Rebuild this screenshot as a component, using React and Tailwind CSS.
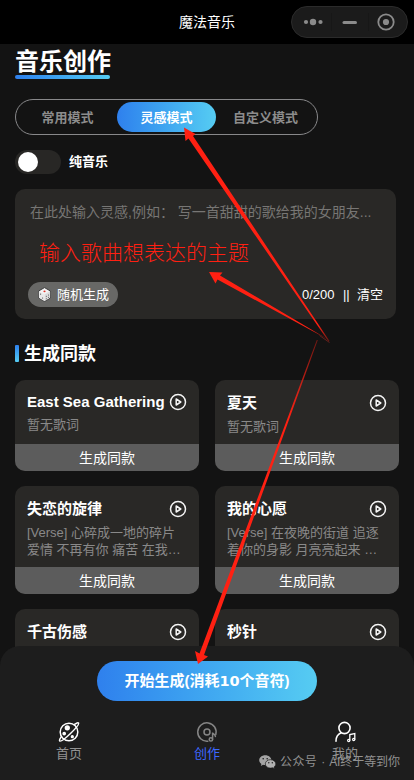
import React from 'react';

const sans = "font-['Liberation_Sans','Noto_Sans_CJK_SC',sans-serif]";

function PlayIcon() {
  return (
    <svg className="h-[18px] w-[18px] shrink-0" viewBox="0 0 18 18" fill="none" stroke="#f4f4f4" strokeWidth="1.5" strokeLinejoin="round">
      <circle cx="9" cy="9" r="7.5" />
      <path d="M7.2 6v6l4.6-3z" />
    </svg>
  );
}

function DiceIcon() {
  return (
    <svg className="h-[15px] w-[15px]" viewBox="0 0 15 15">
      <path d="M7.5.6 13.4 4v7L7.5 14.4 1.6 11V4z" fill="#f2f2f2" stroke="#333" strokeWidth=".9" strokeLinejoin="round" />
      <path d="M7.5 7.4 13.1 4.2v6.6l-5.6 3.3z" fill="#dadada" />
      <path d="M7.5 7.4v6.7L1.9 10.8V4.2z" fill="#e8e8e8" />
      <ellipse cx="7.5" cy="4.3" rx="1.1" ry=".9" fill="#e0362c" />
      <g fill="#444">
        <circle cx="3.6" cy="7.1" r=".6" />
        <circle cx="5.6" cy="11" r=".6" />
        <circle cx="9.3" cy="9.2" r=".5" />
        <circle cx="11.5" cy="7.9" r=".5" />
        <circle cx="9.3" cy="11.7" r=".5" />
        <circle cx="11.5" cy="10.3" r=".5" />
      </g>
    </svg>
  );
}

function PlanetIcon() {
  return (
    <svg className="h-[22px] w-[22px]" viewBox="0 0 22 22" fill="none" stroke="#fff" strokeWidth="1.5" strokeLinecap="round">
      <circle cx="11" cy="11" r="8.8" />
      <path d="M16.6 3.3c2-1.4 3.5-1.8 3.9-1.3.8 1-3 5.7-8 10.5C7.4 17.4 2.7 20.8 1.7 19.9c-.5-.5.1-2 1.5-4" />
      <circle cx="9.3" cy="6.8" r="1.9" fill="#fff" />
      <circle cx="6.2" cy="12.6" r="1.1" fill="#fff" />
      <circle cx="14.3" cy="15.7" r=".9" fill="#fff" />
    </svg>
  );
}

function DiscIcon() {
  return (
    <svg className="h-[22px] w-[22px]" viewBox="0 0 22 22" fill="none" stroke="#858585" strokeWidth="1.5" strokeLinecap="round">
      <path d="M11.8 20.2A9.2 9.2 0 1 1 19.8 13.5" />
      <circle cx="11" cy="11" r="3" />
      <path d="M16.6 18.2v-6.7c.3 1.8 2.6 1.6 2.8 4" />
      <circle cx="14.9" cy="18.4" r="1.7" />
    </svg>
  );
}

function ProfileIcon() {
  return (
    <svg className="h-[22px] w-[22px]" viewBox="0 0 22 22" fill="none" stroke="#fff" strokeWidth="1.6" strokeLinecap="round">
      <circle cx="10.5" cy="7" r="5.6" />
      <path d="M2 20.2c0-4.300 2.200-7.200 5.200-8.400" />
      <path d="M15.8 19.300v-5.700l5-1v5.700" strokeWidth="1.3" />
      <circle cx="14.7" cy="19.500" r="1.1" strokeWidth="1.2" />
      <circle cx="19.7" cy="18.500" r="1.1" strokeWidth="1.2" />
    </svg>
  );
}

function WechatIcon() {
  return (
    <svg className="h-[14px] w-[17px]" viewBox="0 0 17 14">
      <path d="M6.300.3C2.800.3.200 2.500.200 5.200c0 1.500.8 2.900 2.200 3.800l-.6 1.900 2.200-1.100c.7.2 1.500.3 2.300.3 3.400 0 6.100-2.200 6.100-4.900S9.700.3 6.300.3z" fill="#a4a4a4" />
      <path d="M11.500 4.700c3 0 5.300 1.900 5.300 4.200 0 1.300-.7 2.400-1.800 3.200l.5 1.600-1.900-.9c-.6.200-1.300.3-2.100.3-2.900 0-5.200-1.900-5.200-4.200s2.300-4.200 5.200-4.200z" fill="#b0b0b0" stroke="#1b1b1b" strokeWidth=".7" />
      <g fill="#1b1b1b">
        <circle cx="4.200" cy="3.700" r=".8" />
        <circle cx="8.200" cy="3.700" r=".8" />
        <circle cx="9.800" cy="7.700" r=".7" />
        <circle cx="13.300" cy="7.700" r=".7" />
      </g>
    </svg>
  );
}

function SongCard({ title, lyric, height, pad, gap }) {
  return (
    <article className={`flex flex-col overflow-hidden rounded-[10px] bg-[#292826] ${height}`}>
      <div className={`flex flex-1 flex-col px-3 ${pad} ${gap}`}>
        <div className="flex h-[18px] items-center justify-between">
          <h3 className="whitespace-nowrap text-[15px] font-bold leading-[18px] text-white">{title}</h3>
          <PlayIcon />
        </div>
        <div className="whitespace-nowrap text-[13px] leading-[17px] text-[#898989]">
          {lyric.map((line) => <p key={line}>{line}</p>)}
        </div>
      </div>
      <button className="h-[27px] shrink-0 bg-[#5c5c5c] pt-px text-[14px] leading-[26px] text-white">生成同款</button>
    </article>
  );
}

function NavItem({ icon, label, color }) {
  return (
    <div className="flex flex-col items-center gap-[2px]">
      {icon}
      <span className={`text-[13px] leading-[18px] ${color}`}>{label}</span>
    </div>
  );
}

function Arrows() {
  return (
    <svg className="pointer-events-none absolute left-0 top-0 h-[780px] w-[414px]" viewBox="0 0 414 780">
      <defs>
        <linearGradient id="fadeUp" gradientUnits="userSpaceOnUse" x1="300" y1="300" x2="330" y2="342">
          <stop offset="0" stopColor="#ff2012" />
          <stop offset=".6" stopColor="#ff2012" />
          <stop offset="1" stopColor="#ff2012" stopOpacity=".3" />
        </linearGradient>
        <linearGradient id="fadeDown" gradientUnits="userSpaceOnUse" x1="290" y1="420" x2="318" y2="341">
          <stop offset="0" stopColor="#ff2012" />
          <stop offset="1" stopColor="#ff2012" stopOpacity=".4" />
        </linearGradient>
      </defs>
      <path d="M184 127.500 195.500 134 193 136 329.500 341 328.500 341.500 188.500 138.500 185.500 141z" fill="url(#fadeUp)" />
      <path d="M209 272 222.500 272.500 220 275.500 329 340 217.500 279.500 215.500 283.500z" fill="url(#fadeUp)" />
      <path d="M198 664 195 651 199.500 653.500 316.800 340 317.800 340 204 655 208 656.500z" fill="url(#fadeDown)" />
      <path d="M319.500 335.500 329.500 342.500" stroke="#65211c" strokeWidth="1" />
    </svg>
  );
}

export default function App() {
  return (
    <div className={`relative flex h-[780px] w-[414px] flex-col overflow-hidden bg-[#131313] text-white ${sans}`}>
      <header className="grid h-11 shrink-0 grid-cols-[1fr_auto_1fr] items-center bg-black">
        <span />
        <h1 className="text-[14px] leading-[20px]">魔法音乐</h1>
        <div className="mr-[6px] flex h-8 w-[117px] items-center justify-self-end rounded-full border border-[#2b2b2b] bg-[#1b1b1b]">
          <svg className="h-[30px] w-[115px]" viewBox="0 0 115 30" fill="#8b8b8b">
            <circle cx="14" cy="15" r="2.1" />
            <circle cx="21" cy="15" r="3.2" />
            <circle cx="28.5" cy="15" r="2.1" />
            <rect x="39" y="6" width="1" height="18" fill="#171717" />
            <rect x="50.5" y="14" width="14.5" height="3" rx="1.5" />
            <rect x="76" y="6" width="1" height="18" fill="#171717" />
            <circle cx="94" cy="15" r="7.7" fill="none" stroke="#8b8b8b" strokeWidth="1.8" />
            <circle cx="94" cy="15" r="3.1" />
          </svg>
        </div>
      </header>

      <main className="flex min-h-0 flex-1 flex-col items-start overflow-hidden pl-[15px]">
        <h2 className="h-[31px] text-[24px] font-bold leading-[35px]">音乐创作</h2>
        <div className="h-1 w-[95px] shrink-0 rounded-full bg-linear-to-r from-[#2f80ed] to-[#56ccf2]" />

        <div className="mt-5 grid h-9 w-[303px] shrink-0 grid-cols-[99px_99px_99px] items-center rounded-full border border-[#88888a] px-[2px] text-center text-[13px] font-bold leading-[31px] text-[#8c8c8c]">
          <span>常用模式</span>
          <span className="h-[30px] rounded-full bg-linear-to-r from-[#2f80ed] to-[#56ccf2] text-white">灵感模式</span>
          <span>自定义模式</span>
        </div>

        <div className="mt-[15px] flex h-6 shrink-0 items-center gap-2">
          <div className="flex h-6 w-[46px] items-center rounded-full bg-[#282725] pl-[3px]">
            <span className="h-5 w-5 rounded-full bg-white" />
          </div>
          <span className="text-[13px] font-bold leading-5">纯音乐</span>
        </div>

        <section className="mt-[15px] flex h-[130px] w-[381px] shrink-0 flex-col rounded-[10px] bg-[#292826] pl-[13px] pr-[13px] pt-[13px]">
          <p className="whitespace-pre pl-[2px] text-[14px] leading-5 text-[#777674]">在此处输入灵感,例如： 写一首甜甜的歌给我的女朋友...</p>
          <p className="ml-[11px] mt-[16px] h-[30px] whitespace-nowrap text-[21px] font-light leading-[30px] text-[#ff2012]">输入歌曲想表达的主题</p>
          <div className="mt-[14px] flex h-[25px] items-center justify-between">
            <button className="flex h-[25px] w-[90px] items-center gap-[5px] rounded-full bg-[#686866] pl-[9px] text-[13px]">
              <DiceIcon />
              随机生成
            </button>
            <div className="flex items-center pt-px text-[13px] leading-5">
              <span className="w-[41px]">0/200</span>
              <span className="w-[14px]">||</span>
              <span>清空</span>
            </div>
          </div>
        </section>

        <div className="mt-[21px] flex h-[26px] shrink-0 items-center gap-[5px]">
          <span className="h-[17px] w-1 rounded-[1px] bg-linear-to-b from-[#2f80ed] to-[#56ccf2]" />
          <h2 className="pt-px text-[18px] font-bold leading-[26px]">生成同款</h2>
        </div>

        <div className="mt-[14px] grid shrink-0 grid-cols-[184px_184px] gap-x-4 gap-y-[15px]">
          <SongCard title="East Sea Gathering" lyric={['暂无歌词']} height="h-[91px]" pad="pt-[13px]" gap="gap-[5px]" />
          <SongCard title="夏天" lyric={['暂无歌词']} height="h-[91px]" pad="pt-[14px]" gap="gap-[6px]" />
          <SongCard title="失恋的旋律" lyric={['[Verse] 心碎成一地的碎片', '爱情 不再有你 痛苦 在我…']} height="h-[108px]" pad="pt-[14px]" gap="gap-[6px]" />
          <SongCard title="我的心愿" lyric={['[Verse] 在夜晚的街道 追逐', '着你的身影 月亮亮起来 …']} height="h-[108px]" pad="pt-[14px]" gap="gap-[6px]" />
          <SongCard title="千古伤感" lyric={['[Verse]']} height="h-[108px]" pad="pt-[14px]" gap="gap-[6px]" />
          <SongCard title="秒针" lyric={['[Verse]']} height="h-[108px]" pad="pt-[14px]" gap="gap-[6px]" />
        </div>
      </main>

      <footer className="absolute inset-x-0 bottom-0 flex h-[134px] flex-col items-center rounded-t-[20px] bg-[#1d1d1d] pt-[15px]">
        <button className="h-10 w-[220px] shrink-0 rounded-full bg-linear-to-r from-[#2f80ed] to-[#56ccf2] text-[15px] font-bold leading-10">
          开始生成(消耗<span className="font-['DejaVu_Sans',sans-serif] text-[14.5px]">10</span>个音符)
        </button>
        <nav className="mt-5 grid w-full grid-cols-3">
          <NavItem icon={<PlanetIcon />} label="首页" color="text-[#929292]" />
          <NavItem icon={<DiscIcon />} label="创作" color="text-[#3d68ff]" />
          <NavItem icon={<ProfileIcon />} label="我的" color="text-[#929292]" />
        </nav>
      </footer>

      <div className="absolute left-[259px] top-[753px] flex h-[18px] items-center gap-1 whitespace-nowrap text-[12px] leading-[18px] text-[#919191]">
        <WechatIcon />
        <span className="tracking-[.4px]">公众号</span>
        <span>·</span>
        <span className="tracking-[-.1px]">AI终于等到你</span>
      </div>

      <Arrows />
    </div>
  );
}
